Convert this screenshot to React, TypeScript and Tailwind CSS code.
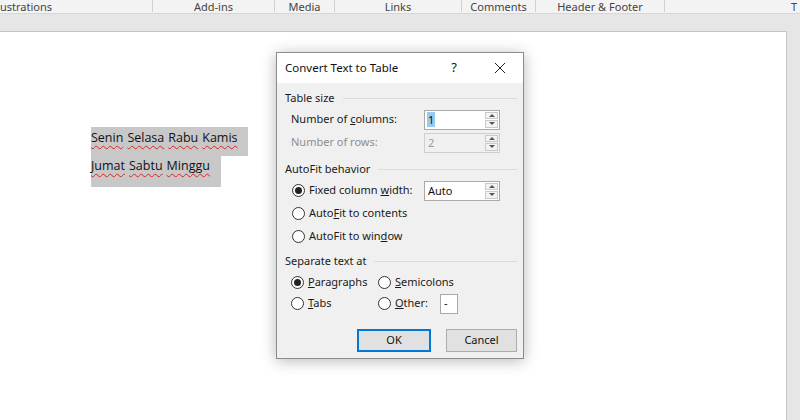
import type { ReactNode } from 'react'

const ui = { fontFamily: '"Noto Sans", "Open Sans", sans-serif' }
const doc = { fontFamily: '"Open Sans", "Noto Sans", sans-serif' }

function Spin() {
  return (
    <div className="flex flex-col w-[14px] h-full gap-[1px] py-[1px] pr-[1px]">
      <div className="flex-1 border border-[#c9c9c9] bg-[#f3f3f3] flex items-center justify-center">
        <div className="w-0 h-0 border-l-[3px] border-r-[3px] border-b-[3px] border-l-transparent border-r-transparent border-b-[#555]" />
      </div>
      <div className="flex-1 border border-[#c9c9c9] bg-[#f3f3f3] flex items-center justify-center">
        <div className="w-0 h-0 border-l-[3px] border-r-[3px] border-t-[3px] border-l-transparent border-r-transparent border-t-[#555]" />
      </div>
    </div>
  )
}

function SpinBox({ value, disabled, selected }: { value: string; disabled?: boolean; selected?: boolean }) {
  return (
    <div
      className={`flex items-stretch w-[76px] h-[20px] border ${
        disabled ? 'border-[#cfcfcf] bg-[#f0f0f0]' : 'border-[#a9a9a9] bg-white'
      }`}
    >
      <div className="flex-1 flex items-center pl-[2px]">
        <span className={`${selected ? 'bg-[#99c9ef] text-[#111]' : ''} ${disabled ? 'text-[#9a9a9a]' : 'text-[#111]'} leading-[15px] px-[1px]`}>
          {value}
        </span>
      </div>
      <Spin />
    </div>
  )
}

function Group({ title }: { title: string }) {
  return (
    <div className="flex items-center h-[20px] pl-[8px] pr-[6px] text-[#1a1a1a]">
      <span>{title}</span>
      <div className="flex-1 h-px bg-[#dcdcdc] ml-[8px]" />
    </div>
  )
}

function Radio({ checked }: { checked?: boolean }) {
  return (
    <div className="w-[13px] h-[13px] rounded-full border border-[#333] bg-white flex items-center justify-center shrink-0">
      {checked && <div className="w-[7px] h-[7px] rounded-full bg-[#222]" />}
    </div>
  )
}

function RadioLabel({ checked, children }: { checked?: boolean; children: ReactNode }) {
  return (
    <div className="flex items-center gap-[4px]">
      <Radio checked={checked} />
      <span className="text-[#1a1a1a]">{children}</span>
    </div>
  )
}

function Word({ children }: { children: string }) {
  return <span className="underline decoration-wavy decoration-[#d22] decoration-1 underline-offset-[3px]">{children}</span>
}

export default function App() {
  const tabs = [
    { label: 'ustrations', w: 'w-[153px]', align: 'justify-start' },
    { label: 'Add-ins', w: 'w-[122px]', align: 'justify-center' },
    { label: 'Media', w: 'w-[60px]', align: 'justify-center' },
    { label: 'Links', w: 'w-[127px]', align: 'justify-center' },
    { label: 'Comments', w: 'w-[74px]', align: 'justify-center' },
    { label: 'Header & Footer', w: 'w-[129px]', align: 'justify-center' },
  ]

  return (
    <div className="relative w-[800px] h-[420px] overflow-hidden bg-[#e6e6e6] text-[11px]" style={ui}>
      {/* ribbon group labels */}
      <div className="flex h-[14px] bg-[#f3f3f3] border-b border-[#d6d6d6] text-[#444] text-[11px] leading-[13px]">
        {tabs.map((t) => (
          <div key={t.label} className={`${t.w} flex ${t.align} border-r border-[#d0d0d0] h-[12px]`}>
            <span>{t.label}</span>
          </div>
        ))}
        <div className="flex-1 flex justify-end pr-[3px]">
          <span>T</span>
        </div>
      </div>

      <div className="h-[17px]" />

      {/* page */}
      <div className="flex h-[389px]">
        <div className="w-[787px] h-full bg-white border-t border-r border-[#c6c6c6] pl-[91px] pt-[95px] text-[12.5px] text-[#111]" style={doc}>
          <div className="w-[157px] h-[29px] bg-[#c8c8c8] flex items-start pt-[2px] gap-[4px]">
            <Word>Senin</Word>
            <Word>Selasa</Word>
            <Word>Rabu</Word>
            <Word>Kamis</Word>
          </div>
          <div className="w-[130px] h-[31px] bg-[#c8c8c8] flex items-start pt-[1px] gap-[4px]">
            <Word>Jumat</Word>
            <Word>Sabtu</Word>
            <Word>Minggu</Word>
          </div>
        </div>
      </div>

      {/* dialog */}
      <div className="absolute left-[276px] top-[52px] w-[248px] h-[307px] bg-[#f0f0f0] border border-[#8c8c8c] shadow-[0_2px_14px_rgba(0,0,0,0.28)] flex flex-col">
        <div className="h-[30px] bg-white flex items-center pl-[8px] text-[11.5px] text-[#111]">
          <span className="flex-1">Convert Text to Table</span>
          <span className="text-[13px]">?</span>
          <svg className="mr-[17px] ml-[37px]" width="12" height="12" viewBox="0 0 12 12">
            <path d="M1 1 L11 11 M11 1 L1 11" stroke="#222" strokeWidth="1" />
          </svg>
        </div>

        <div className="pt-[5px] flex flex-col">
          <Group title="Table size" />
          <div className="flex items-center h-[23px] pl-[14px]">
            <span className="w-[133px] text-[#1a1a1a]">
              Number of <u>c</u>olumns:
            </span>
            <SpinBox value="1" selected />
          </div>
          <div className="flex items-center h-[23px] pl-[14px]">
            <span className="w-[133px] text-[#8d8d8d]">Number of rows:</span>
            <SpinBox value="2" disabled />
          </div>

          <div className="h-[5px]" />
          <Group title="AutoFit behavior" />
          <div className="flex items-center h-[23px] pl-[15px]">
            <div className="w-[132px]">
              <RadioLabel checked>
                Fixed column <u>w</u>idth:
              </RadioLabel>
            </div>
            <SpinBox value="Auto" />
          </div>
          <div className="flex items-center h-[23px] pl-[15px]">
            <RadioLabel>
              Auto<u>F</u>it to contents
            </RadioLabel>
          </div>
          <div className="flex items-center h-[23px] pl-[15px]">
            <RadioLabel>
              AutoFit to win<u>d</u>ow
            </RadioLabel>
          </div>

          <div className="h-[3px]" />
          <Group title="Separate text at" />
          <div className="flex items-center h-[22px] pl-[14px]">
            <div className="w-[87px]">
              <RadioLabel checked>
                <u>P</u>aragraphs
              </RadioLabel>
            </div>
            <RadioLabel>
              <u>S</u>emicolons
            </RadioLabel>
          </div>
          <div className="flex items-center h-[21px] pl-[14px]">
            <div className="w-[87px]">
              <RadioLabel>
                <u>T</u>abs
              </RadioLabel>
            </div>
            <div className="w-[62px]">
              <RadioLabel>
                <u>O</u>ther:
              </RadioLabel>
            </div>
            <div className="w-[18px] h-[20px] border border-[#a9a9a9] bg-white flex items-center pl-[3px] text-[#111]">
              -
            </div>
          </div>

          <div className="flex justify-end gap-[15px] pr-[6px] mt-[15px]">
            <div className="w-[74px] h-[23px] bg-[#e1e1e1] border-2 border-[#0078d7] flex items-center justify-center text-[#111]">
              OK
            </div>
            <div className="w-[71px] h-[23px] bg-[#e1e1e1] border border-[#adadad] flex items-center justify-center text-[#111]">
              Cancel
            </div>
          </div>
        </div>
      </div>
    </div>
  )
}
